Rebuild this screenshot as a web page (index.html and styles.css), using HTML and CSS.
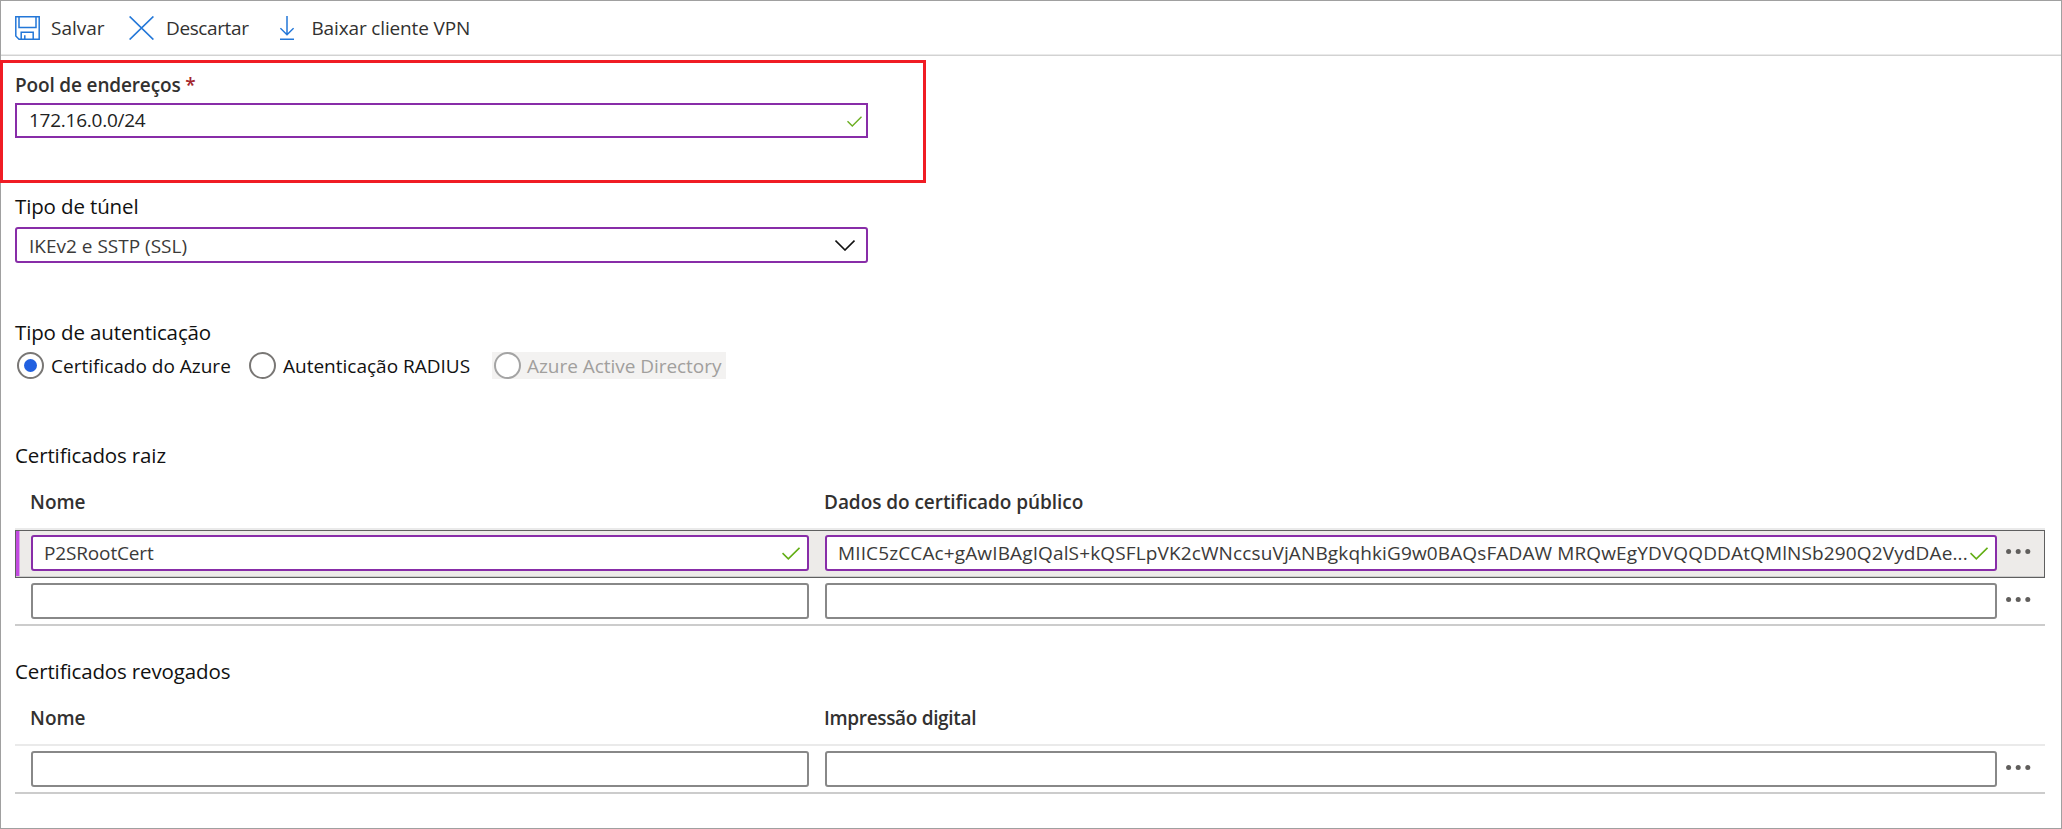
FILE: index.html
```
<!DOCTYPE html>
<html lang="pt-BR">
<head>
<meta charset="utf-8">
<title>Configuração ponto a site</title>
<link rel="stylesheet" href="styles.css">
</head>
<body>
<div class="frame">
  <header class="toolbar">
    <div class="command save">
      <svg width="25" height="24" viewBox="0 0 25 24" fill="none" stroke="#2377d8" stroke-width="1.5"><path d="M.8.8h23.4v22.4H4L.8 20zM4 .8v10.6h17V.8M6.2 23.2v-6.9h12v6.9M9.8 23v-3.7"/></svg>
      <span>Salvar</span>
    </div>
    <div class="command discard">
      <svg width="25" height="24" viewBox="0 0 25 24" fill="none" stroke="#2377d8" stroke-width="1.7"><path d="M.6.5l23.8 23M24.4.5L.6 23.5"/></svg>
      <span>Descartar</span>
    </div>
    <div class="command download">
      <svg width="14" height="24" viewBox="0 0 14 24" fill="none" stroke="#2377d8" stroke-width="1.5"><path d="M7 0v18.5M.4 12.2L7 18.8l6.6-6.6M0 23.2h14"/></svg>
      <span>Baixar cliente VPN</span>
    </div>
  </header>

  <section class="pool">
    <div class="label strong">Pool de endereços <span class="required">*</span></div>
    <div class="field square valid">
      <span class="value address">172.16.0.0/24</span>
      <svg class="check" width="15" height="11" viewBox="0 0 15 11" fill="none" stroke="#6bae20" stroke-width="1.4"><path d="M.5 5.2l4.8 4.8L14.5.8"/></svg>
    </div>
  </section>

  <section class="tunnel">
    <div class="title">Tipo de túnel</div>
    <div class="field select valid">
      <span class="value">IKEv2 e SSTP (SSL)</span>
      <svg width="20" height="11" viewBox="0 0 20 11" fill="none" stroke="#111" stroke-width="1.6"><path d="M.5.6L10 10 19.5.6"/></svg>
    </div>
  </section>

  <section class="auth">
    <div class="title">Tipo de autenticação</div>
    <div class="radios">
      <div class="radio azure"><span class="circle on"></span><span>Certificado do Azure</span></div>
      <div class="radio radius"><span class="circle"></span><span>Autenticação RADIUS</span></div>
      <div class="radio disabled"><span class="circle"></span><span>Azure Active Directory</span></div>
    </div>
  </section>

  <section class="roots">
    <div class="title">Certificados raiz</div>
    <div class="head"><span>Nome</span><span class="data">Dados do certificado público</span></div>
    <div class="row selected">
      <div class="field valid">
        <span class="value name">P2SRootCert</span>
        <svg class="check" width="18" height="13" viewBox="0 0 18 13" fill="none" stroke="#62ae14" stroke-width="1.6"><path d="M.5 6.2l5.8 5.6L17.5.8"/></svg>
      </div>
      <div class="field valid">
        <span class="value key">MIIC5zCCAc+gAwIBAgIQalS+kQSFLpVK2cWNccsuVjANBgkqhkiG9w0BAQsFADAW MRQwEgYDVQQDDAtQMlNSb290Q2VydDAe...</span>
        <svg class="check" width="18" height="13" viewBox="0 0 18 13" fill="none" stroke="#62ae14" stroke-width="1.6"><path d="M.5 6.2l5.8 5.6L17.5.8"/></svg>
      </div>
      <svg class="more" width="25" height="5" viewBox="0 0 25 5" fill="#605e5c"><circle cx="2.6" cy="2.5" r="2.5"/><circle cx="12.2" cy="2.5" r="2.5"/><circle cx="21.8" cy="2.5" r="2.5"/></svg>
    </div>
    <div class="row">
      <div class="field"></div>
      <div class="field"></div>
      <svg class="more" width="25" height="5" viewBox="0 0 25 5" fill="#605e5c"><circle cx="2.6" cy="2.5" r="2.5"/><circle cx="12.2" cy="2.5" r="2.5"/><circle cx="21.8" cy="2.5" r="2.5"/></svg>
    </div>
  </section>

  <section class="revoked">
    <div class="title">Certificados revogados</div>
    <div class="head"><span>Nome</span><span class="print">Impressão digital</span></div>
    <div class="row">
      <div class="field"></div>
      <div class="field"></div>
      <svg class="more" width="25" height="5" viewBox="0 0 25 5" fill="#605e5c"><circle cx="2.6" cy="2.5" r="2.5"/><circle cx="12.2" cy="2.5" r="2.5"/><circle cx="21.8" cy="2.5" r="2.5"/></svg>
    </div>
  </section>
</div>
</body>
</html>
```
FILE: styles.css
```
* { box-sizing: border-box; }
body { margin: 0; background: #fff; }
svg { display: block; flex: none; }

.frame {
  width: 2062px;
  height: 829px;
  border: 1px solid #a0a0a0;
  font: 19px/28px "Open Sans", "Noto Sans", sans-serif;
  color: #323130;
  white-space: nowrap;
}

.toolbar {
  display: flex;
  align-items: center;
  height: 54px;
  padding-left: 14px;
  border-bottom: 1px solid #eaeaea;
  box-shadow: 0 1px #d2d2d2;
}
.command { display: flex; align-items: center; }
.save { gap: 11px; width: 114px; }
.discard { gap: 12px; width: 151px; letter-spacing: -.39px; }
.download { gap: 17.5px; letter-spacing: -.15px; }

.pool {
  width: 926px;
  height: 123px;
  margin: 5px 0 0 -1px;
  padding: 8px 0 0 12px;
  border: 3px solid #f01c24;
}
.label { margin-bottom: 4px; }
.strong { font-weight: 600; letter-spacing: -.15px; }
.required { color: #a4262c; }

.field {
  display: flex;
  align-items: center;
  justify-content: space-between;
  height: 36px;
  border: 2px solid #888;
  border-radius: 3px;
  background: #fff;
}
.valid { border-color: #882da8; }
.square { width: 853px; height: 35px; padding: 0 4px 0 12px; border-radius: 0; }
.square .check { margin-top: 2px; }
.address { margin-top: -2px; letter-spacing: -.25px; }
.select { width: 853px; margin-top: 7px; padding: 0 11px 0 12px; }
.select .value { padding-top: 1px; }

.title { font-size: 20.5px; letter-spacing: -.13px; color: #111; }
.tunnel { padding: 9px 0 0 14px; }

.auth { padding: 55px 0 0 14px; color: #111; }
.radios { display: flex; margin-top: 6px; height: 27px; }
.radio { display: flex; align-items: center; gap: 7px; padding-left: 2px; height: 27px; line-height: 27px; }
.radio span:last-child { padding-top: 2px; }
.azure { width: 232px; }
.radius { width: 245px; }
.circle {
  display: grid;
  place-items: center;
  width: 27px;
  height: 27px;
  border: 2px solid #797775;
  border-radius: 50%;
  background: #fff;
}
.on::after { content: ""; width: 13px; height: 13px; border-radius: 50%; background: #2160e0; }
.disabled { width: 234px; gap: 6px; background: #f3f2f1; color: #a19f9d; letter-spacing: -.04px; }
.disabled .circle { border-color: #a4a4a4; }

.roots { padding: 62px 16px 0 14px; }
.revoked { padding: 31px 16px 0 14px; }
.head, .row { display: grid; grid-template-columns: 778px 1172px 1fr; column-gap: 16px; padding-left: 16px; }
.head {
  margin-top: 19px;
  padding: 0 0 12px 15px;
  border-bottom: 2px solid #eaeaea;
  font-weight: 600;
}
.data { letter-spacing: -.05px; }
.print { letter-spacing: -.33px; }
.row { align-items: start; height: 48px; padding-top: 5px; border-bottom: 2px solid #ccc; }
.row .field { padding: 0 7px 0 11px; }
.row .field .value { margin-top: -1px; }
.row .more { margin: 14px 0 0 -7px; }
.selected {
  background: linear-gradient(90deg, #c24be0 4px, #d9a6e6 4px 5px, #edebe9 5px);
  border-bottom: 1px solid #5f5f5f;
  box-shadow: inset 1px 1px #5f5f5f, inset -1px 0 #5f5f5f, inset 0 -1px #ccc;
}
.value { color: #3b3a39; }
.address { color: #222; }
.name { letter-spacing: -.15px; }
.key { letter-spacing: .13px; }
```
